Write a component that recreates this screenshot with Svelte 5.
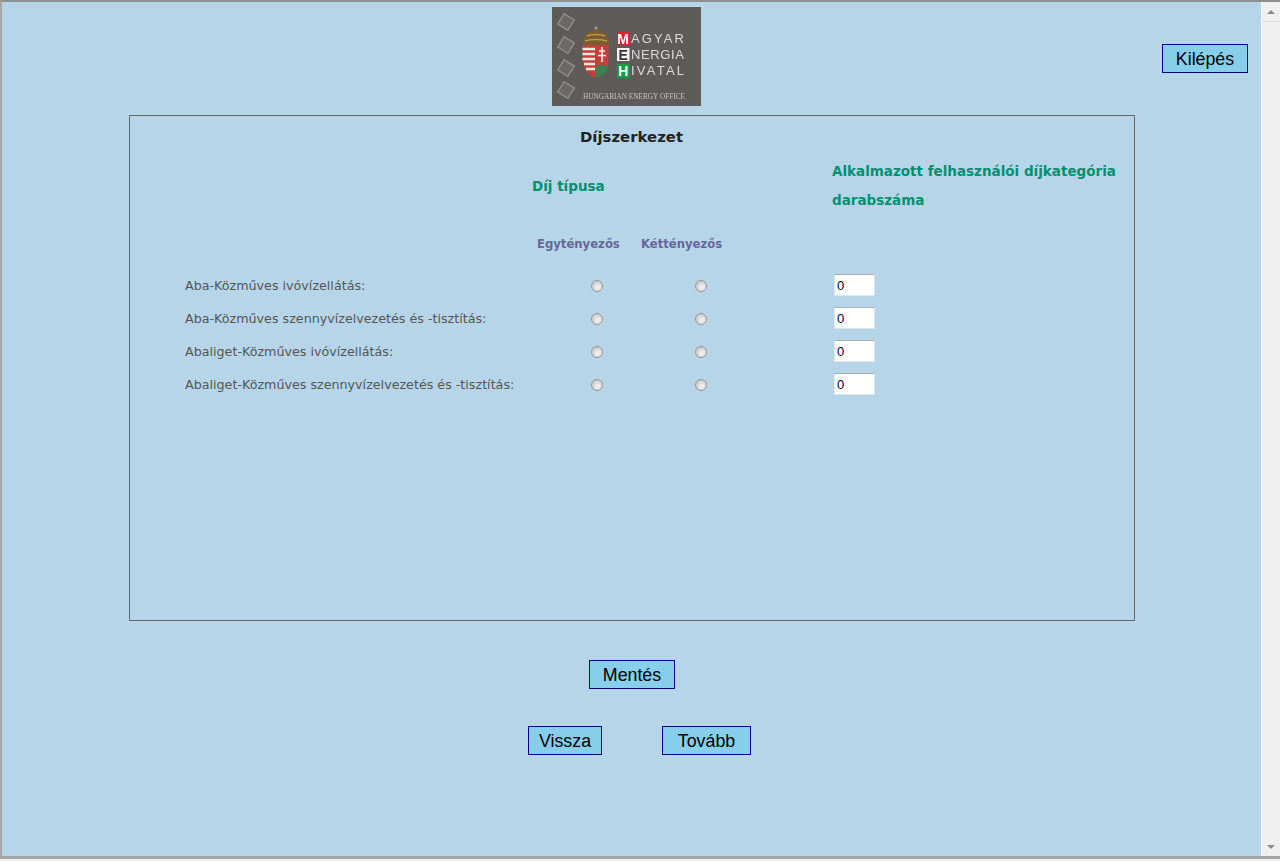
<script>
  const rows = [
    'Aba-Közműves ivóvízellátás:',
    'Aba-Közműves szennyvízelvezetés és -tisztítás:',
    'Abaliget-Közműves ivóvízellátás:',
    'Abaliget-Közműves szennyvízelvezetés és -tisztítás:'
  ];
  const diamonds = [15, 38, 61, 83];
</script>

<div class="window">
  <div class="view">
    <main class="page">
      <header class="top">
        <svg class="logo" width="149" height="99" viewBox="0 0 149 99" role="img" aria-label="Magyar Energia Hivatal">
          <rect width="149" height="99" fill="#5f5b59" />
          <g class="soft">
            {#each diamonds as y}
              <rect x="8" y={y - 6} width="12" height="12" fill="#6c6866" stroke="#8f8c8a" stroke-width="1.5" transform="rotate(32 14 {y})" />
            {/each}
            <path d="M44 19v5M42 21h4" stroke="#a89a80" stroke-width="1.200" fill="none" />
            <path d="M31 38c-1-9 5-15 13-15s14 6 13 15z" fill="#7a5c30" />
            <path d="M35 29c5-2 13-2 18 0M33 34c6-2 16-2 22 0" stroke="#c09c50" stroke-width="1.400" fill="none" />
            <path d="M30.500 38h26v14c0 9-5 16-13 19c-8-3-13-10-13-19z" fill="#c4403a" />
            <path d="M30.500 42h12.500M30.500 47h12.500M30.500 52h12.500M32 57h11M34 62h9" stroke="#ece7e0" stroke-width="2.300" />
            <path d="M50 40v15M47 44h6M46 48.500h8" stroke="#f1ece6" stroke-width="1.700" />
            <path d="M43.500 71v-10l6-4 7 3c-2 5-6 9-13 11z" fill="#3f7f50" />
            <rect x="65" y="25" width="12.500" height="13" fill="#d7262e" />
            <rect x="65" y="41" width="12.500" height="13" fill="#f2f2f2" />
            <rect x="65" y="57" width="12.500" height="14" fill="#16a04a" />
            <text class="cap light" x="71.200" y="36.500" text-anchor="middle">M</text>
            <text class="cap dark" x="71.200" y="52.500" text-anchor="middle">E</text>
            <text class="cap light" x="71.200" y="69" text-anchor="middle">H</text>
            <text class="word" x="79" y="36" textLength="53" lengthAdjust="spacing">AGYAR</text>
            <text class="word" x="79" y="52" textLength="53" lengthAdjust="spacing">NERGIA</text>
            <text class="word" x="79" y="68" textLength="53" lengthAdjust="spacing">IVATAL</text>
            <text class="tag" x="31" y="92" textLength="102" lengthAdjust="spacingAndGlyphs">HUNGARIAN ENERGY OFFICE</text>
          </g>
        </svg>
        <button class="btn exit" type="button">Kilépés</button>
      </header>

      <section class="panel">
        <h1>Díjszerkezet</h1>
        <div class="fees">
          <h2 class="type">Díj típusa</h2>
          <h2 class="count">Alkalmazott felhasználói díjkategória darabszáma</h2>
          <h3 class="one">Egytényezős</h3>
          <h3 class="two">Kéttényezős</h3>
          {#each rows as label, i}
            <span class="label">{label}</span>
            <span class="pick"><input type="radio" name="r{i}" /></span>
            <span class="pick"><input type="radio" name="r{i}" /></span>
            <input class="num" type="text" value="0" />
          {/each}
        </div>
      </section>

      <div class="save"><button class="btn" type="button">Mentés</button></div>
      <nav class="nav">
        <button class="btn back" type="button">Vissza</button>
        <button class="btn next" type="button">Tovább</button>
      </nav>
    </main>

    <div class="scroll" aria-hidden="true">
      <div class="arrow-box"><span class="up"></span></div>
      <div class="track"></div>
      <div class="arrow-box end"><span class="down"></span></div>
    </div>
  </div>
</div>

<style>
  :global(body) {
    margin: 0;
    background: #f0f0f0;
    overflow: hidden;
  }
  .window {
    height: 861px;
    box-sizing: border-box;
    padding-bottom: 2px;
  }
  .view {
    height: 100%;
    box-sizing: border-box;
    display: flex;
    border-top: 2px solid #8f8f8f;
    border-left: 2px solid #a6a6a6;
    border-bottom: 3px solid #a6a6a6;
    background: #b6d5e8;
  }
  .page {
    flex: 1;
    min-width: 0;
    font-family: "DejaVu Sans", Verdana, sans-serif;
  }
  .top {
    height: 113px;
    display: grid;
    grid-template-columns: 550px 149px 1fr;
    align-items: start;
  }
  .logo {
    grid-column: 2;
    margin-top: 5px;
    display: block;
  }
  .soft { filter: blur(0.4px); }
  .cap {
    font: bold 14px "Liberation Sans", sans-serif;
  }
  .light { fill: #fff; }
  .dark { fill: #333; }
  .word {
    font: 13px "Liberation Sans", sans-serif;
    fill: #dcdad8;
  }
  .tag {
    font: 8px "Liberation Serif", serif;
    fill: #c6c3c1;
  }
  .btn {
    box-sizing: border-box;
    height: 29px;
    padding: 1px 0 0;
    border: 1px solid #000080;
    border-radius: 0;
    background: #87ceeb;
    color: #000;
    font: 17.800px "Liberation Sans", Arial, sans-serif;
  }
  .exit {
    grid-column: 3;
    justify-self: end;
    width: 86px;
    margin-top: 42px;
    margin-right: 13px;
  }
  .panel {
    box-sizing: border-box;
    width: 1006px;
    height: 506px;
    margin-left: 127px;
    border: 1px solid #666;
    padding-left: 55px;
    color: #555;
  }
  h1 {
    margin: 13px 0 0 -56px;
    font-size: 14.900px;
    line-height: 17px;
    font-weight: bold;
    color: #222;
    text-align: center;
  }
  .fees {
    display: grid;
    grid-template-columns: 352px 104px 191px 1fr;
    grid-template-rows: 59px 59px repeat(4, 33px);
    margin-top: 10px;
  }
  h2 {
    margin: 0;
    font-size: 13.500px;
    font-weight: bold;
    color: #009070;
  }
  .type {
    grid-column: 2 / 4;
    margin: 2px 0 0 -5px;
    align-self: center;
    line-height: 29px;
  }
  .count {
    grid-column: 4;
    line-height: 29px;
    align-self: end;
  }
  h3 {
    margin: 0;
    font-size: 11.650px;
    font-weight: bold;
    color: #666699;
    padding-top: 22px;
    line-height: 14px;
  }
  .one { grid-column: 2; }
  .two { grid-column: 3; }
  .label {
    grid-column: 1;
    font-size: 12.700px;
    line-height: 24px;
  }
  .pick {
    display: flex;
    align-items: center;
    height: 24px;
    padding-left: 54px;
  }
  input[type="radio"] {
    appearance: none;
    box-sizing: border-box;
    width: 12px;
    height: 12px;
    margin: 0;
    border: 1px solid #979797;
    border-radius: 50%;
    background: radial-gradient(circle at 60% 65%, #f4f4f4 0%, #dcdcdc 45%, #b5b5b5 100%);
  }
  .num {
    box-sizing: border-box;
    justify-self: start;
    width: 41px;
    height: 22px;
    margin-left: 2px;
    padding: 0 0 0 2px;
    border: 1px solid #dfe6ee;
    border-top-color: #a9aeb3;
    border-radius: 1px;
    background: #fff;
    color: #000033;
    font: 13px "Liberation Sans", Arial, sans-serif;
  }
  .save {
    display: flex;
    justify-content: center;
    width: 1006px;
    margin: 39px 0 0 127px;
  }
  .save .btn { width: 86px; }
  .nav {
    display: flex;
    gap: 60px;
    margin: 37px 0 0 526px;
  }
  .back { width: 74px; }
  .next { width: 89px; }
  .scroll {
    width: 19px;
    flex: none;
    display: flex;
    flex-direction: column;
    box-sizing: border-box;
    border-left: 1px solid #fff;
    background: #f0f0f0;
  }
  .arrow-box {
    height: 19px;
    display: flex;
    align-items: center;
    justify-content: center;
    border-bottom: 1px solid #dcdcdc;
  }
  .arrow-box.end { border-bottom: 0; }
  .track { flex: 1; }
  .up, .down {
    width: 0;
    height: 0;
    border-left: 4px solid transparent;
    border-right: 4px solid transparent;
  }
  .up { border-bottom: 4px solid #8a8a8a; }
  .down { border-top: 4px solid #8a8a8a; }
</style>
